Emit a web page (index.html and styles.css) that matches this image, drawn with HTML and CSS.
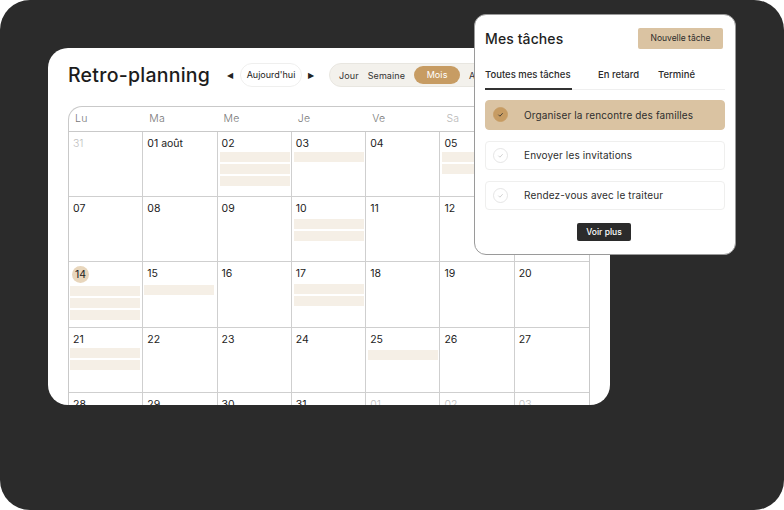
FILE: index.html
```html
<!DOCTYPE html>
<html lang="fr">
<head>
<meta charset="utf-8">
<title>Retro-planning</title>
<link rel="stylesheet" href="styles.css">
</head>
<body>
<main class="stage">
  <section class="planner">
    <header class="planner-head">
      <h1 class="planner-title">Retro-planning</h1>
      <div class="nav">
        <span class="arrow">◀</span>
        <span class="today">Aujourd'hui</span>
        <span class="arrow">▶</span>
      </div>
      <div class="views">
        <span class="view">Jour</span>
        <span class="view">Semaine</span>
        <span class="view view-active">Mois</span>
        <span class="view">Année</span>
      </div>
    </header>
    <div class="calendar">
      <div class="dow">Lu</div><div class="dow">Ma</div><div class="dow">Me</div><div class="dow">Je</div><div class="dow">Ve</div><div class="dow dow-muted">Sa</div><div class="dow dow-muted">Di</div>

      <div class="cell"><span class="num muted">31</span></div>
      <div class="cell"><span class="num">01 août</span></div>
      <div class="cell"><span class="num">02</span><i class="ev"></i><i class="ev"></i><i class="ev"></i></div>
      <div class="cell"><span class="num">03</span><i class="ev"></i></div>
      <div class="cell"><span class="num">04</span></div>
      <div class="cell"><span class="num">05</span><i class="ev"></i><i class="ev"></i></div>
      <div class="cell"><span class="num">06</span></div>

      <div class="cell"><span class="num">07</span></div>
      <div class="cell"><span class="num">08</span></div>
      <div class="cell"><span class="num">09</span></div>
      <div class="cell"><span class="num">10</span><i class="ev ev-mid"></i><i class="ev"></i></div>
      <div class="cell"><span class="num">11</span></div>
      <div class="cell"><span class="num">12</span></div>
      <div class="cell"><span class="num">13</span></div>

      <div class="cell"><span class="num num-today">14</span><i class="ev ev-low"></i><i class="ev"></i><i class="ev"></i></div>
      <div class="cell"><span class="num">15</span><i class="ev ev-low"></i></div>
      <div class="cell"><span class="num">16</span></div>
      <div class="cell"><span class="num">17</span><i class="ev ev-mid"></i><i class="ev"></i></div>
      <div class="cell"><span class="num">18</span></div>
      <div class="cell"><span class="num">19</span></div>
      <div class="cell"><span class="num">20</span></div>

      <div class="cell"><span class="num">21</span><i class="ev"></i><i class="ev"></i></div>
      <div class="cell"><span class="num">22</span></div>
      <div class="cell"><span class="num">23</span></div>
      <div class="cell"><span class="num">24</span></div>
      <div class="cell"><span class="num">25</span><i class="ev ev-mid"></i></div>
      <div class="cell"><span class="num">26</span></div>
      <div class="cell"><span class="num">27</span></div>

      <div class="cell"><span class="num">28</span></div>
      <div class="cell"><span class="num">29</span></div>
      <div class="cell"><span class="num">30</span></div>
      <div class="cell"><span class="num">31</span></div>
      <div class="cell"><span class="num muted">01</span></div>
      <div class="cell"><span class="num muted">02</span></div>
      <div class="cell"><span class="num muted">03</span></div>
    </div>
  </section>

  <aside class="tasks">
    <header class="tasks-head">
      <h2 class="tasks-title">Mes tâches</h2>
      <button class="new-task">Nouvelle tâche</button>
    </header>
    <nav class="tabs">
      <span class="tab tab-active">Toutes mes tâches</span>
      <span class="tab tab-late">En retard</span>
      <span class="tab tab-done">Terminé</span>
    </nav>
    <ul class="task-list">
      <li class="task task-done">
        <svg class="check" viewBox="0 0 15 15"><circle cx="7.5" cy="7.5" r="7" class="check-ring"/><path d="M5.4 7.7l1.5 1.5 2.8-3" class="check-mark"/></svg>
        Organiser la rencontre des familles
      </li>
      <li class="task">
        <svg class="check" viewBox="0 0 15 15"><circle cx="7.5" cy="7.5" r="7" class="check-ring"/><path d="M5.4 7.7l1.5 1.5 2.8-3" class="check-mark"/></svg>
        Envoyer les invitations
      </li>
      <li class="task">
        <svg class="check" viewBox="0 0 15 15"><circle cx="7.5" cy="7.5" r="7" class="check-ring"/><path d="M5.4 7.7l1.5 1.5 2.8-3" class="check-mark"/></svg>
        Rendez-vous avec le traiteur
      </li>
    </ul>
    <div class="more-row"><button class="more">Voir plus</button></div>
  </aside>
</main>
</body>
</html>
```
FILE: styles.css
```css
* { box-sizing: border-box; }
html, body { margin: 0; height: 100%; background: #fff; }
body { font-family: Inter, "Liberation Sans", sans-serif; color: #222; overflow: hidden; }

.stage {
  position: relative;
  width: 784px;
  height: 510px;
  background: #2b2b2b;
  border-radius: 30px;
  padding: 48px 174px 105px 48px;
}

.planner {
  width: 562px;
  height: 357px;
  background: #fff;
  border-radius: 20px;
  overflow: hidden;
  padding: 13px 20px 0;
}

.planner-head { display: flex; align-items: center; height: 28px; margin-bottom: 17px; }
.planner-title { margin: 0; width: 155px; font-size: 19.5px; font-weight: 500; color: #1c1c1c; letter-spacing: .25px; white-space: nowrap; }
.nav { display: flex; align-items: center; width: 107px; }
.arrow { font-size: 8px; color: #222; width: 14px; text-align: center; font-family: "DejaVu Sans", sans-serif; }
.today {
  height: 24px; line-height: 22px; width: 62px; margin: 0 2px 0 3px;
  border: 1px solid #efefee; border-radius: 12px; font-size: 9px; text-align: center; white-space: nowrap;
}
.views {
  display: flex; align-items: center; flex: none; margin-left: -1px;
  width: 240px; height: 24px; background: #f3f1ec; border: 1px solid #e8e6e0; border-radius: 12px; padding-left: 9px;
  font-size: 9px; color: #333; letter-spacing: .1px;
}
.view { margin-right: 9px; white-space: nowrap; }
.view-active { background: #c79c63; color: #fff; width: 46px; height: 18px; line-height: 18px; text-align: center; border-radius: 9px; margin: 0 9px 0 0; }

.calendar {
  display: grid;
  grid-template-columns: repeat(7, 1fr);
  grid-template-rows: 25px repeat(5, 65.2px);
  width: 522px;
  border-top: 1px solid #c9c9c9;
  border-left: 1px solid #c9c9c9;
  border-right: 1px solid #c9c9c9;
  border-top-left-radius: 14px;
}
.dow { padding: 5px 0 0 6px; font-size: 10.5px; font-weight: 300; color: #777; border-bottom: 1px solid #c9c9c9; letter-spacing: .2px; }
.dow-muted { color: #b8b8b8; }
.cell { display: flex; flex-direction: column; padding: 4px 2px 0 1px; border-bottom: 1px solid #cfcfcf; border-right: 1px solid #cfcfcf; min-width: 0; }
.cell:nth-child(7n) { border-right: 0; }
.num { height: 16px; padding-left: 3px; font-size: 10.5px; font-weight: 400; line-height: 16px; color: #222; white-space: nowrap; }
.muted { color: #bdbdbd; font-weight: 300; }
.num-today { width: 17px; height: 17px; padding: 0; margin: 0 0 0 2px; background: #e8d6bc; border-radius: 50%; text-align: center; line-height: 17px; }
.ev { display: block; height: 10px; margin: 0 0 2px 1px; width: 70px; background: #f5efe6; }
.cell:nth-child(7n+1) .ev, .cell:nth-child(7n+2) .ev { margin-left: 0; }
.ev-mid { margin-top: 2px; }
.ev-low { margin-top: 3px; }

.tasks {
  position: absolute;
  left: 474px;
  top: 14px;
  width: 262px;
  height: 241px;
  background: #fff;
  border: 1px solid #9a9a9a;
  border-radius: 12px;
  padding: 12px 10px 0;
}
.tasks-head { display: flex; justify-content: space-between; align-items: center; height: 22px; }
.tasks-title { margin: 0; font-size: 14px; font-weight: 500; color: #1f1f1f; letter-spacing: .1px; }
.new-task {
  width: 85px; height: 21px; margin-right: 2px; padding: 0; border: 0; border-radius: 2px;
  background: #dac3a2; font: 400 8.5px Inter, sans-serif; color: #2b2b2b;
}
.tabs { display: flex; height: 29px; margin-top: 12px; padding-top: 8px; border-bottom: 1px solid #efefef; font-size: 9.5px; font-weight: 500; color: #2b2b2b; }
.tab { white-space: nowrap; }
.tab-active { width: 87px; border-bottom: 2px solid #333; height: 21px; }
.tab-late { margin-left: 26px; width: 60px; }

.task-list { list-style: none; margin: 10px 0 0; padding: 0; display: flex; flex-direction: column; gap: 11px; }
.task {
  display: flex; align-items: center; height: 29px; padding: 0 0 1px 7px;
  border: 1px solid #efefee; border-radius: 4px; font-size: 10px; font-weight: 400; letter-spacing: .13px; color: #2e2e2e;
}
.task-done { height: 30px; background: #dac3a2; border-color: #dac3a2; }
.check { width: 15px; height: 15px; margin-right: 16px; flex: none; }
.check-ring { fill: #fff; stroke: #dedede; stroke-width: .8; }
.check-mark { fill: none; stroke: #c8c8c8; stroke-width: .8; }
.task-done .check-ring { fill: #c79c63; stroke: #c79c63; }
.task-done .check-mark { stroke: #2b2b2b; }

.more-row { display: flex; justify-content: center; margin-top: 13px; padding-right: 2px; }
.more {
  width: 54px; height: 18px; padding: 0; border: 0; border-radius: 2px;
  background: #2b2b2b; color: #fff; font: 500 8.5px Inter, sans-serif;
}
```
